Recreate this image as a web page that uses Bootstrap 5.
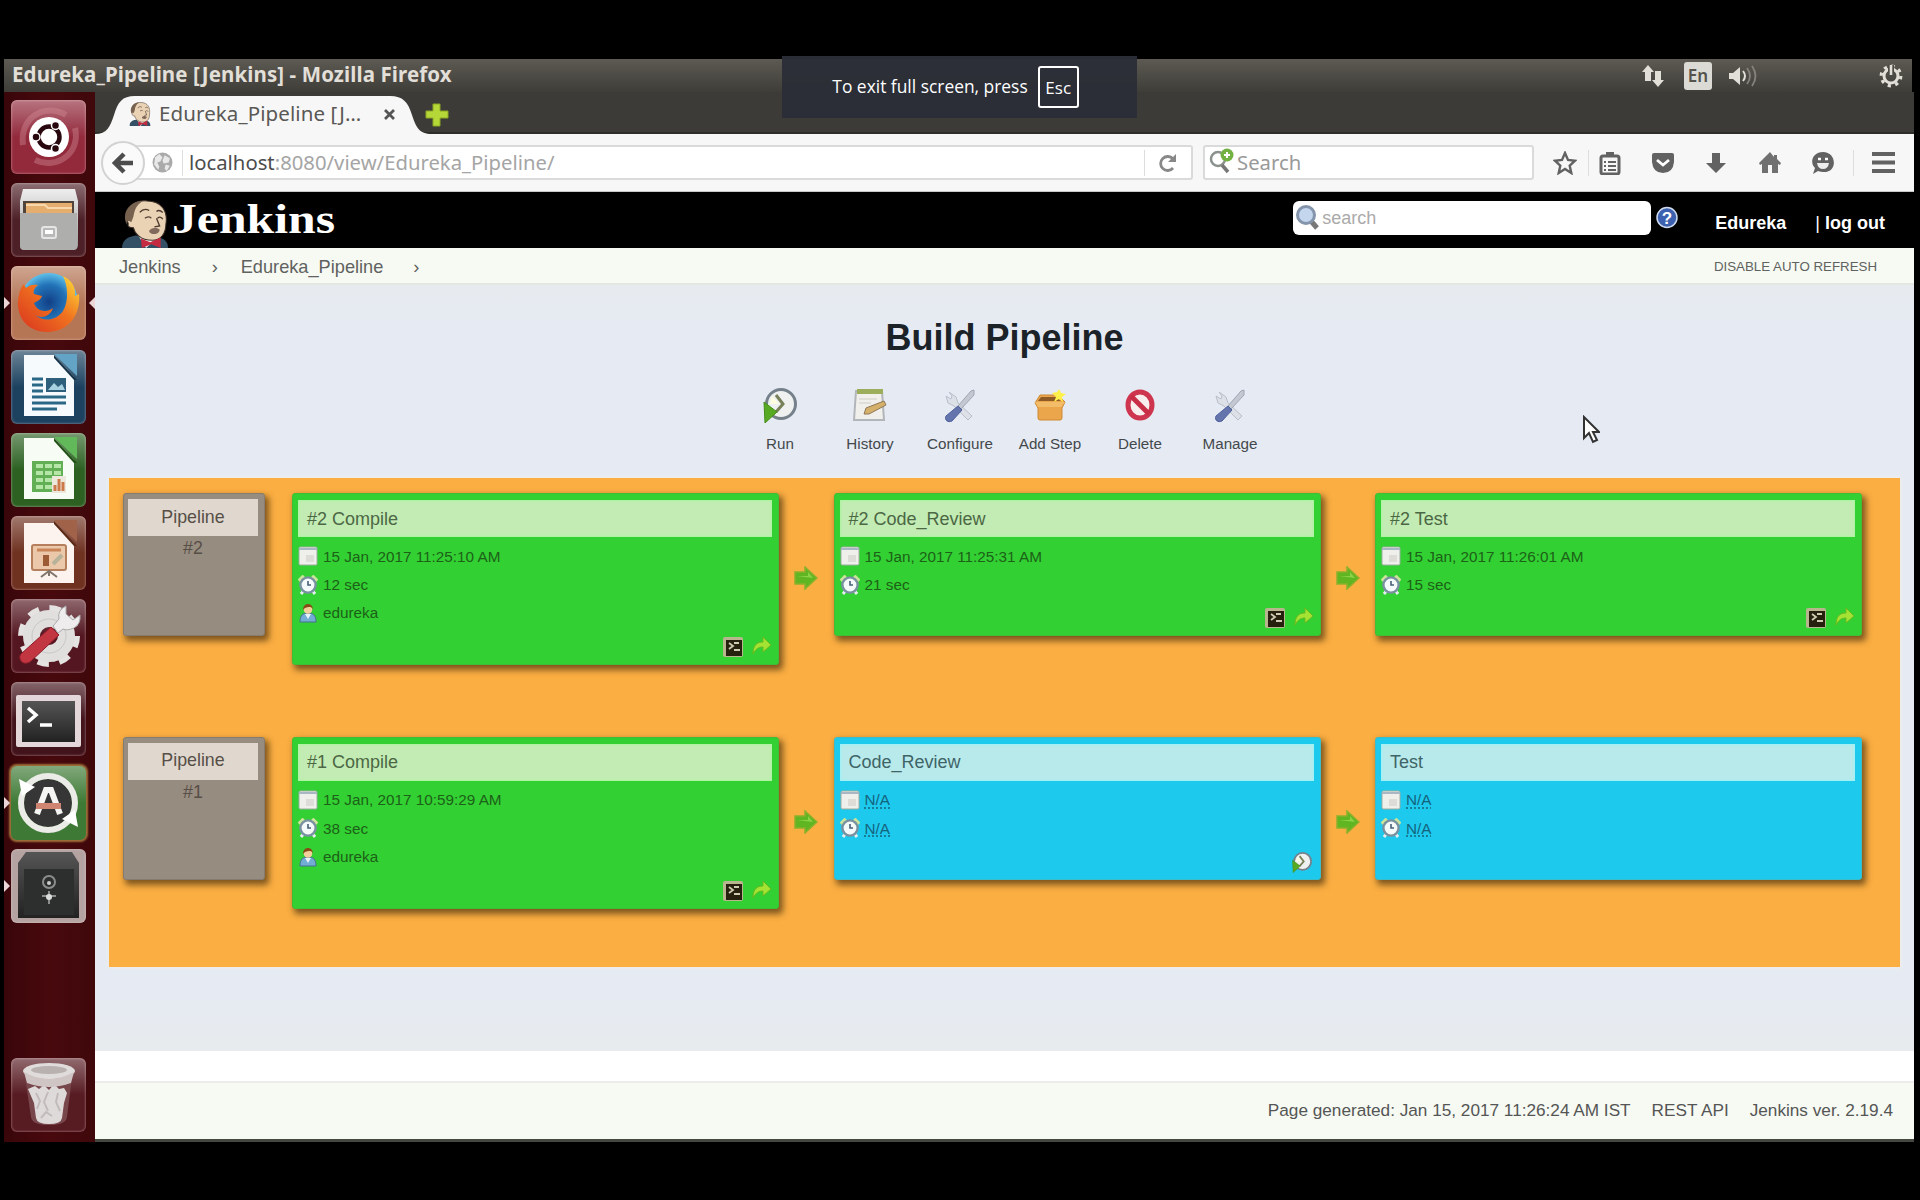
<!DOCTYPE html>
<html lang="en">
<head>
<meta charset="utf-8">
<title>Edureka_Pipeline [Jenkins]</title>
<link rel="stylesheet" href="https://cdn.jsdelivr.net/npm/bootstrap@5.3.0/dist/css/bootstrap.min.css">
<style>
body{background:#000;width:1920px;height:1200px;overflow:hidden;font-family:"Liberation Sans",Arial,sans-serif;line-height:1}
svg{display:block;flex:none}
.screen{margin:59px 8px 58px 4px;height:1083px;background:#42090c}
.ubuntu-text{font-family:"Noto Sans","Open Sans",sans-serif}
.panel-top{height:33px;background:linear-gradient(#5c5a52,#3e3d38);color:#e2dfd8;padding-left:8px;padding-right:8px}
.panel-title{font-size:20.5px;font-weight:700;letter-spacing:.1px;padding-bottom:2px}
.lang-box{width:28px;height:28px;background:#dcdad5;color:#55534d;border-radius:3px;font-size:17px;font-weight:600}
.launcher{width:91px;padding:8px 0 10px 7px;background:linear-gradient(90deg,#39060a,#48090d 50%,#3f080b)}
.tile{width:75px;height:74px;border-radius:6px;margin-bottom:9.2px;box-shadow:inset 0 0 2px 1px rgba(255,220,220,.28);overflow:visible;flex:none}
.pip{position:absolute;top:31px;border:6px solid transparent}
.pip-l{left:-7px;border-left-color:#ecd5d7;border-right-width:0}
.pip-r{right:-9px;border-right-color:#ecd5d7;border-left-width:0}
.tabstrip{height:42px;background:#3c3b37;border-bottom:2px solid #2e2d29}
.tab-shape{width:345px;height:42px}
.tab-face{left:0;top:2px;z-index:0}
.tab-label{font-size:20.5px;color:#5a5855;width:208px;letter-spacing:.1px}
.toolbar-ff{height:58px;background:#f7f7f7;border-bottom:1px solid #c8c8c8}
.back-btn{width:44px;height:44px;border-radius:50%;background:#fafafa;border:2px solid #d2d2d2;margin-left:6px;z-index:2}
.urlbar{width:1060px;height:35px;margin-left:-12px;border:2px solid #dadada;border-radius:3px;background:#fff;font-size:20.3px;color:#a5a5a5}
.findbar{width:331px;height:35px;margin-left:10px;border:2px solid #dadada;border-radius:3px;background:#fff;font-size:20.3px;color:#999}
.vsep{width:1px;height:26px;background:#ddd}
.tools{color:#626262}
.jhead{height:56px;background:#000}
.jsearch{width:358px;height:34px;border-radius:6px;background:#fff;color:#aaa;font-size:18px}
.jlink{color:#fff;font-weight:700;font-size:18px}
.crumbs{height:37px;background:#f6faf3;border-bottom:2px solid #e3e7e4;padding:4px 37px 0 24px;color:#5f625f;font-size:18.2px}
.crumb-small{font-size:13.3px;padding-bottom:2px}
.jbody{height:766px;background:linear-gradient(#e7ebef,#e6ebf3 40px,#e6ebf3 710px,#e7ebed)}
.jbody h1{font-size:36px;font-weight:700;color:#1b2228;margin:33px 0 29px;line-height:40px;text-align:center}
.acts{padding-left:640px}
.act{width:90px;font-size:15.2px;color:#44484c;gap:13px}
.board{margin:27px 14px 0 14px;height:489px;background:#fbae42;padding:15px 38px 0 14px;box-shadow:0 0 3px #fdf0dc}
.lane{height:243.6px}
.stepbox{border-radius:3px;box-shadow:3px 4px 6px 1px rgba(92,62,20,.78)}
.revbox{width:142px;height:143px;background:#978c80;border:1px solid #867b70;padding:5px 6px 0 4px;color:#574f47;font-size:17.8px;margin-right:27px}
.revbox-head{background:#e0d8cf;height:37px}
.job{width:487px;padding:6px 6px 6px 5px}
.job-head{height:37px;padding-left:9px;font-size:18px}
.ok{background:#33d033;border:1px solid #3fbe35;color:#1c6117}
.ok .job-head{background:#c2ecb4;color:#4c6744;box-shadow:inset 0 0 2px 1px #aaf6a0}
.wait{background:#1ec9ee;border:1px solid #3bbcc8;color:#14647d}
.wait .job-head{background:#b8eaeb;color:#3f6467;box-shadow:inset 0 0 2px 1px #9cf2f8}
.facts{font-size:15.3px;padding-top:5px}
.fact{height:28.3px;gap:5px}
.short{height:143px}.tall{height:172px}
.na{text-decoration:underline dotted;text-underline-offset:2px}
.link-arrow{width:54.5px;padding-top:73px}
.white-gap{height:32px;background:#fff;border-bottom:2px solid #ececea}
.jfoot{height:59px;background:#f6faf3;border-bottom:3px solid #444640;font-size:17.2px;color:#555;padding-right:21px;gap:21px}
.fs-note{left:782px;top:56px;width:355px;height:62px;padding-right:8px;background:rgba(43,46,54,.96);color:#fff;font-family:"Open Sans","Noto Sans",sans-serif;font-size:17.4px}
.fs-key{border:2px solid #fff;border-radius:3px;width:41px;height:42px;margin-left:10px;font-size:17px}
.pointer{left:1582px;top:415px}
</style>
<script src="https://cdn.jsdelivr.net/npm/bootstrap@5.3.0/dist/js/bootstrap.bundle.min.js"></script>
</head>
<body>
<svg width="0" height="0" class="position-absolute">
<defs>
<linearGradient id="sheen" x2="0" y2="1"><stop stop-color="#fff" stop-opacity=".35"/><stop offset=".5" stop-color="#fff" stop-opacity="0"/></linearGradient>
<linearGradient id="steel" x2="0" y2="1"><stop stop-color="#eee"/><stop offset="1" stop-color="#999"/></linearGradient>
<linearGradient id="coal" x2="0" y2="1"><stop stop-color="#555"/><stop offset="1" stop-color="#222"/></linearGradient>
<linearGradient id="fox" x1="0" y1="1" x2="1" y2="0"><stop stop-color="#d8321f"/><stop offset=".55" stop-color="#f0731f"/><stop offset="1" stop-color="#ffe23c"/></linearGradient>
<radialGradient id="globe"><stop stop-color="#123f86"/><stop offset=".6" stop-color="#2273b8"/><stop offset="1" stop-color="#5fc0ea"/></radialGradient>
<symbol id="cal" viewBox="0 0 20 20"><rect x="1" y="1" width="18" height="18" rx="1.5" fill="#eff0ec" stroke="#9cad9f"/><path d="M1 2h18v2H1z" fill="#a9b6c4"/><path d="M8 9h8v7H8z" fill="#dedcd6"/></symbol>
<symbol id="alarm" viewBox="0 0 20 20"><path d="M1 6L6 1M19 6l-5-5" stroke="#cbe49b" stroke-width="4"/><path d="M3 19l3-4M17 19l-3-4" stroke="#e4eeee" stroke-width="3"/><circle cx="10" cy="10" r="7.6" fill="#f4fafa" stroke="#7891a0" stroke-width="2.4"/><path d="M10 6v4h3" fill="none" stroke="#486077" stroke-width="1.6"/></symbol>
<symbol id="person" viewBox="0 0 20 20"><path d="M2 19c0-7 3-9 8-9s8 2 8 9z" fill="#72add4" stroke="#476f93"/><path d="M7 11l3 5 3-5z" fill="#e8f3fa"/><circle cx="10" cy="6.5" r="4.3" fill="#f3cf9b"/><path d="M5 7c0-8 10-8 10 0-1-3-2-3-4-3S6 5 5 7z" fill="#8a4a16"/></symbol>
<symbol id="console" viewBox="0 0 22 22"><rect x="1" y="1" width="20" height="20" rx="2" fill="#b9b58e"/><rect x="4" y="4" width="16" height="16" fill="#26210f"/><path d="M7 7l4 3-4 3M12 7h5M12 14h6" fill="none" stroke="#cfcbb0" stroke-width="1.8"/></symbol>
<symbol id="redo" viewBox="0 0 20 20"><path d="M1 18C1 9 5 6 11 6V1l8 8-8 7v-5c-5 0-7 2-10 7z" fill="#a4e234" stroke="#69b91e"/></symbol>
<symbol id="next" viewBox="0 0 24 24"><path d="M1 6h10V1l12 11-12 11v-5H1z" fill="#5fb522" stroke="#8cb12c" stroke-width="1.5"/><path d="M3 10h11V6l5 6z" fill="#8ad246"/></symbol>
<symbol id="run" viewBox="0 0 34 36"><circle cx="18" cy="17" r="14.5" fill="#eef1ef" stroke="#76808a" stroke-width="3"/><path d="M13 8l7 9-7 8" fill="none" stroke="#788059" stroke-width="3"/><path d="M9 9l7 8H7z" fill="#fffde0"/><path d="M1 15l13 10L2 36z" fill="#58aa22" stroke="#468c1b"/></symbol>
<symbol id="tools" viewBox="0 0 34 34"><path d="M6 4l7 5 2 6 14 13-4 4L11 18 5 15 3 8l5 3 1-3z" fill="#dde1e7" stroke="#b8bfca"/><path d="M31 2l-3 1-13 15 3 3L31 7z" fill="#c4c9d1" stroke="#9da5b2"/><path d="M15 18l4 4-10 11c-4 2-8-1-6-5z" fill="#6474ac" stroke="#50609b"/></symbol>
<symbol id="butler" viewBox="0 0 44 50"><path d="M0 50c0-9 7-12 13-13l22 2c6 1 9 5 9 11z" fill="#335065"/><path d="M15 36l8 14 12-12z" fill="#f5f2ef"/><path d="M6 25C0 7 14 0 24 1c14 0 20 11 18 24 0 10-5 17-13 17C17 42 12 34 11 29c-4 0-6-2-5-4z" fill="#ead3b5" stroke="#3d3029" stroke-width="1"/><path d="M5 26C-2 13 9 0 20 1 14 5 12 10 11 17l-2 6c-4-3-5 0-4 3z" fill="#77614f"/><path d="M17 13c3-4 6-4 9-2M33 12c2-2 4-1 6 1M22 19c2-2 5-2 6 0M34 19c2-2 4-1 5 1M33 19l3 8-5 1" fill="none" stroke="#4c3a2e" stroke-width="1.3"/><path d="M26 33c0-4 8-5 10-2 0 5-8 6-10 2z" fill="#81695b"/><path d="M18 40l9 4 10-5v11l-9-4-9 4z" fill="#c42a40"/></symbol>
</defs>
</svg>

<div class="screen d-flex flex-column">
 <header class="panel-top ubuntu-text d-flex align-items-center flex-shrink-0">
  <span class="panel-title">Edureka_Pipeline [Jenkins] - Mozilla Firefox</span>
  <div class="ms-auto d-flex align-items-center">
   <svg width="26" height="26" viewBox="0 0 26 26" fill="#e2dfd8"><path d="M8 2l6 7h-3v9H5V9H2zM18 24l6-7h-3V8h-6v9h-3z"/></svg>
   <span class="lang-box d-flex align-items-center justify-content-center" style="margin-left:18px">En</span>
   <svg width="30" height="26" viewBox="0 0 30 26" style="margin-left:16px"><path d="M1 10h4l7-6v18l-7-6H1z" fill="#e2dfd8"/><path d="M15 8q4 5 0 10" fill="none" stroke="#e2dfd8" stroke-width="2"/><path d="M19 5q6 8 0 16M24 3q7 10 0 20" fill="none" stroke="#85837c" stroke-width="1.8"/></svg>
   <svg width="26" height="26" viewBox="-13 -13 26 26" style="margin-left:120px" fill="none" stroke="#e2dfd8"><circle r="7" stroke-width="3"/><circle r="9.8" stroke-width="3.2" stroke-dasharray="3.2 4.5"/><path d="M0-11V0" stroke="#4c4b45" stroke-width="6"/><path d="M0-11V-1" stroke-width="2.6"/></svg>
  </div>
 </header>
 <div class="d-flex flex-fill">
  <nav class="launcher d-flex flex-column flex-shrink-0">
   <svg class="tile" viewBox="0 0 75 74" style="background:#922a3c"><rect width="75" height="74" rx="6" fill="url(#sheen)"/><path d="M12 45C8 18 34 2 55 15M64 28c6 25-18 42-40 32" fill="none" stroke="#d58e95" stroke-width="6" opacity=".4"/><circle cx="38" cy="37" r="20" fill="#fff"/><circle cx="38" cy="37" r="10.500" fill="none" stroke="#29070f" stroke-width="4.500"/><g fill="#29070f" stroke="#fff" stroke-width="1.500"><circle cx="25" cy="37" r="4"/><circle cx="44.500" cy="25.500" r="4"/><circle cx="44.500" cy="48.500" r="4"/></g></svg>
   <svg class="tile" viewBox="0 0 75 74" style="background:#4d2027"><rect width="75" height="74" rx="6" fill="url(#sheen)"/><path d="M12 6h52l3 12v44q0 5-5 5H14q-5 0-5-5V18z" fill="url(#steel)"/><path d="M12 18h51v12H12z" fill="#51443a"/><path d="M15 20h46v10H15z" fill="#e5ad6e"/><path d="M15 22h19l3 3h24" stroke="#f8d7ac" fill="none" stroke-width="2"/><path d="M9 30h57v33q0 4-4 4H13q-4 0-4-4z" fill="#aeaeac"/><rect x="31" y="44" width="14" height="11" rx="2" fill="#b8b8b8" stroke="#e5e5e5" stroke-width="2"/><path d="M34 49h8" stroke="#fff" stroke-width="4"/></svg>
   <div class="tile position-relative" style="background:#b57656"><span class="pip pip-l"></span><span class="pip pip-r"></span><svg width="75" height="74" viewBox="0 0 75 74"><rect width="75" height="74" rx="6" fill="url(#sheen)"/><circle cx="38" cy="36" r="29" fill="url(#globe)"/><path d="M52 10c9 4 13 12 12 20l4-2c2 19-9 37-30 38C15 67 3 48 8 29c1-6 3-9 5-11l2 4c3-3 7-4 12-3-4 3-5 6-4 9l8 2c-1 4-5 5-8 7 3 9 13 10 19 5-3 9-12 11-18 7 8 7 21 6 28-4 6-10 5-25 0-35z" fill="url(#fox)"/></svg></div>
   <svg class="tile" viewBox="0 0 75 74" style="background:#1d4260"><rect width="75" height="74" rx="6" fill="url(#sheen)"/><path d="M43 4h23v22z" fill="#63a3c6"/><path d="M13 5h30l20 22v39H13z" fill="#f6fafd"/><path d="M43 5l23 25h-3L43 8z" fill="#16344a"/><path d="M21 29h11M21 35h11M21 41h11M21 47h34M21 53h34M21 59h25" stroke="#2b6886" stroke-width="3"/><path d="M35 28h20v14H35z" fill="#2e607c"/><path d="M37 40l6-7 4 4 4-3 3 6z" fill="#a8d2e0"/></svg>
   <svg class="tile" viewBox="0 0 75 74" style="background:#2c6122"><rect width="75" height="74" rx="6" fill="url(#sheen)"/><path d="M43 4h23v22z" fill="#62b95a"/><path d="M13 5h30l20 22v39H13z" fill="#f7fcf5"/><path d="M43 5l23 25h-3L43 8z" fill="#205014"/><path d="M21 28h31v31H21z" fill="#63af55"/><path d="M25 31h7v4h-7zM34 31h7v4h-7zM43 31h7v4h-7zM25 38h7v4h-7zM34 38h7v4h-7zM43 38h7v4h-7zM25 45h7v4h-7zM34 45h7v4h-7zM25 52h7v4h-7zM34 52h7v4h-7z" fill="#b6e5a8"/><path d="M41 43h14v17H41z" fill="#ece8dc"/><path d="M44 58v-6M48 58V46M52 58v-9" stroke="#cd7a4b" stroke-width="3"/></svg>
   <svg class="tile" viewBox="0 0 75 74" style="background:#6f3120"><rect width="75" height="74" rx="6" fill="url(#sheen)"/><path d="M43 4h23v22z" fill="#a06248"/><path d="M13 7h30l20 22v38H13z" fill="#fdf3ee"/><path d="M43 5l23 25h-3L43 8z" fill="#5c2914"/><rect x="21" y="29" width="34" height="25" rx="2" fill="#ecc8ab" stroke="#b57e5d" stroke-width="2"/><path d="M26 34h24" stroke="#c98457" stroke-width="3"/><path d="M32 50V39h6v11z" fill="#9c5b35"/><path d="M42 48l9-9" stroke="#b6b39a" stroke-width="4"/><path d="M38 55l-8 6M38 55l8 6M38 54v6" stroke="#81746a" stroke-width="2"/></svg>
   <svg class="tile" viewBox="0 0 75 74" style="background:#541721"><rect width="75" height="74" rx="6" fill="url(#sheen)"/><circle cx="38" cy="37" r="27" fill="none" stroke="#e5e3e2" stroke-width="8" stroke-dasharray="11 10.200"/><circle cx="38" cy="37" r="17.500" fill="none" stroke="#e1dfde" stroke-width="17"/><circle cx="38" cy="37" r="17" fill="none" stroke="#c9c7c7" stroke-width="1"/><path d="M42 27l6-7q-2-9 7-13v8l7 6 7-5q1 9-6 13-7 3-11 1l-5 4z" fill="#eeeced" stroke="#aaa"/><path d="M40 28l8 8-29 27q-6 3-9-1-3-5 1-8z" fill="#c23642" stroke="#8f1b2a"/></svg>
   <svg class="tile" viewBox="0 0 75 74" style="background:#43131b"><rect width="75" height="74" rx="6" fill="url(#sheen)"/><rect x="5" y="13" width="65" height="52" rx="2" fill="#e4d7da"/><rect x="11" y="19" width="53" height="41" fill="url(#coal)"/><path d="M17 26l8 7-8 7M29 43h12" fill="none" stroke="#fff" stroke-width="3.500"/></svg>
   <div class="tile position-relative" style="background:#3e7a35;box-shadow:0 0 2px 2px #a1703a"><span class="pip pip-l"></span><svg width="75" height="74" viewBox="0 0 75 74"><rect width="75" height="74" rx="6" fill="url(#sheen)"/><circle cx="37" cy="37" r="24" fill="#363636"/><circle cx="37" cy="37" r="27" fill="none" stroke="#ebebe8" stroke-width="6"/><path d="M8 13l16 8-13 9zM67 61l-16-8 13-9z" fill="#fff"/><path d="M26 48l9-24h5l9 24" fill="none" stroke="#f5f5f4" stroke-width="6"/><path d="M25 40h25" stroke="#ce8571" stroke-width="6"/></svg></div>
   <div class="tile position-relative" style="background:#b4a3a1"><span class="pip pip-l"></span><svg width="75" height="74" viewBox="0 0 75 74"><path d="M15 3h46l7 11v55H7V14z" fill="url(#coal)"/><path d="M13 20h50v46H13z" fill="#2d2f2e"/><circle cx="38" cy="33" r="6" fill="none" stroke="#8c8e8d" stroke-width="2"/><circle cx="38" cy="34" r="2" fill="#ccc"/><path d="M31 47h14M38 42v13" stroke="#8c8e8d" stroke-width="2"/><circle cx="38" cy="48" r="3" fill="#ddd"/></svg></div>
   <svg class="tile mt-auto mb-0" viewBox="0 0 75 74" style="background:#571b22"><rect width="75" height="74" rx="6" fill="url(#sheen)"/><path d="M13 12l7 47q1 8 18 8t18-8l6-47z" fill="#77474b"/><path d="M17 31l7-3 4 3 5-4 5 5 5-6 5 5 5-1 3 5-3 10-2 15q-1 6-13 6t-13-6l-2-15z" fill="#dfdada"/><path d="M25 35l4 8-3 8M37 34l-4 10 4 9M47 35l-2 9 4 9M30 60l5-6 6 4" fill="none" stroke="#c2bbbb" stroke-width="2"/><ellipse cx="38" cy="13" rx="26" ry="8" fill="#e0dcdb"/><ellipse cx="38" cy="12" rx="18" ry="4" fill="#b9b1b0"/><path d="M13 14q25 14 50 0l-3 11q-22 8-44 0z" fill="#cfc5c4"/></svg>
  </nav>
  <main class="flex-fill bg-white">
   <div class="tabstrip ubuntu-text d-flex">
    <div class="tab-shape position-relative d-flex align-items-center">
     <svg class="tab-face position-absolute" width="345" height="40" viewBox="0 0 345 40"><path d="M0 40c12 0 15-7 19-19C23 8 27 2 40 2h255c13 0 18 6 22 19 4 12 7 19 20 19z" fill="#f7f7f7"/></svg>
     <svg class="position-relative" width="22" height="24" viewBox="0 0 44 50" style="margin:2px 0 0 34px"><use href="#butler"/></svg>
     <span class="tab-label position-relative text-nowrap" style="margin:1px 0 0 8px">Edureka_Pipeline [J…</span>
     <svg class="position-relative" width="11" height="11" viewBox="0 0 11 11" style="margin:2px 0 0 17px"><path d="M1 1l9 9M10 1l-9 9" stroke="#555" stroke-width="2.800"/></svg>
    </div>
    <svg width="24" height="24" viewBox="0 0 24 24" style="margin:11px 0 0 -15px"><path d="M8 1h7v7h8v7h-8v8H8v-8H1V8h7z" fill="#b5d738" stroke="#8aa823"/></svg>
   </div>
   <div class="toolbar-ff ubuntu-text d-flex align-items-center">
    <div class="back-btn d-flex align-items-center justify-content-center flex-shrink-0"><svg width="22" height="22" viewBox="0 0 22 22"><path d="M12 2L3 11l9 9M4 11h17" fill="none" stroke="#4d4d4d" stroke-width="4.500"/></svg></div>
    <div class="urlbar d-flex align-items-center flex-shrink-0">
     <svg width="21" height="21" viewBox="0 0 20 20" style="margin-left:17px"><circle cx="10" cy="10" r="9.500" fill="#aaa"/><path d="M3 5l4-3 3 3-2 4-3 1 2 4-1 3-4-5zM12 3l5 3-1 4-5 1-1-3zM13 12l4 1-3 5-2-2z" fill="#e9e9e9"/></svg>
     <span class="vsep" style="margin:0 6px 0 9px"></span><span class="urltext"><span style="color:#4d4d4d">localhost</span>:8080/view/Edureka_Pipeline/</span>
     <span class="vsep ms-auto"></span>
     <svg width="18" height="20" viewBox="0 0 18 20" style="margin:0 14px 0 14px"><path d="M14 6a7 7 0 1 0 0 9" fill="none" stroke="#888" stroke-width="2.800"/><path d="M17 1v8H9z" fill="#888"/></svg>
    </div>
    <div class="findbar d-flex align-items-center flex-shrink-0">
     <svg width="26" height="26" viewBox="0 0 26 26" style="margin:-4px 2px 0 4px"><circle cx="9" cy="11" r="7" fill="none" stroke="#8b928c" stroke-width="2.500"/><path d="M13 17l6 7" stroke="#777" stroke-width="3.500"/><circle cx="18" cy="7" r="6.500" fill="#73b143"/><path d="M18 4v6M15 7h6" stroke="#fff" stroke-width="2"/></svg>
     <span>Search</span>
    </div>
    <div class="tools d-flex align-items-center">
     <svg width="24" height="24" viewBox="0 0 24 24" style="margin-left:19px"><path d="M12 2l3 7 7 .7-5.300 5 1.600 7.300L12 18l-6.300 4 1.600-7.300L2 9.700 9 9z" fill="none" stroke="currentColor" stroke-width="2.400"/></svg>
     <span class="vsep" style="margin:0 10px 0 11px"></span>
     <svg width="22" height="24" viewBox="0 0 22 24"><rect x="2" y="5" width="18" height="18" rx="2" fill="none" stroke="currentColor" stroke-width="3"/><path d="M7 1h8v5H7z" fill="currentColor"/><path d="M5 11h2M9 11h8M5 15h2M9 15h8M5 19h2M9 19h8" stroke="currentColor" stroke-width="2"/></svg>
     <svg width="24" height="22" viewBox="0 0 24 22" style="margin-left:30px"><path d="M1 3q0-2 2-2h18q2 0 2 2v7q-1 11-11 11T1 10z" fill="currentColor"/><path d="M6 8l6 5 6-5" fill="none" stroke="#fff" stroke-width="2.800"/></svg>
     <svg width="22" height="22" viewBox="0 0 22 22" style="margin-left:30px"><path d="M7 1h8v10h6L11 21 1 11h6z" fill="currentColor"/></svg>
     <svg width="24" height="22" viewBox="0 0 24 22" style="margin-left:31px"><path d="M12 0L1 11l1 2 2-1v9h6v-8h4v8h6v-9l2 1 1-2-4-4V3h-3v2z" fill="#707070"/></svg>
     <svg width="24" height="24" viewBox="0 0 24 24" style="margin-left:29px"><path d="M12 1c14 0 15 21 0 20-3 0-4-1-5-1l-5 3 2-6C-2 11 2 1 12 1z" fill="currentColor"/><path d="M7 8h3M14 8h3" stroke="#fff" stroke-width="2.500"/><path d="M6 12h12q-1 6-6 6t-6-6z" fill="#eee"/></svg>
     <span class="vsep" style="margin:0 18px"></span>
     <svg width="23" height="23" viewBox="0 0 23 23"><path d="M0 3h23M0 11.500h23M0 20h23" stroke="currentColor" stroke-width="4"/></svg>
    </div>
   </div>
   <div class="jhead d-flex align-items-center">
    <svg width="46" height="48" viewBox="0 0 44 50" preserveAspectRatio="none" style="margin:8px 0 0 27px"><use href="#butler"/></svg>
    <svg width="170" height="50" viewBox="0 0 170 50"><text x="4" y="38" textLength="163" lengthAdjust="spacingAndGlyphs" font-family="Liberation Serif" font-weight="700" font-size="42" fill="#fff">Jenkins</text></svg>
    <div class="jsearch d-flex align-items-center ms-auto" style="margin-top:-5px"><svg width="25" height="26" viewBox="0 0 25 26" style="margin:-2px 2px 0 2px"><path d="M16 17l6 7" stroke="#787878" stroke-width="5"/><circle cx="11" cy="11" r="8.500" fill="#c3d6ed" stroke="#8394ab" stroke-width="3"/></svg>search</div>
    <svg width="22" height="23" viewBox="0 0 22 23" style="margin:0 37px 5px 5px"><circle cx="11" cy="11.500" r="10" fill="#3c61b0" stroke="#cfdbef" stroke-width="1.500"/><text x="11" y="18" text-anchor="middle" font-family="Liberation Sans" font-weight="700" font-size="17" fill="#fff">?</text></svg>
    <span class="jlink" style="margin:5px 29px 0 0">Edureka</span><span class="jlink" style="margin:5px 29px 0 0"><span class="fw-normal">|</span> log out</span>
   </div>
   <div class="crumbs d-flex align-items-center">
    <span>Jenkins</span><span style="margin:0 23px 0 31px">›</span><span>Edureka_Pipeline</span><span style="margin-left:30px">›</span>
    <span class="crumb-small ms-auto">DISABLE AUTO REFRESH</span>
   </div>
   <section class="jbody overflow-hidden">
    <h1>Build Pipeline</h1>
    <div class="acts d-flex">
     <div class="act d-flex flex-column align-items-center"><svg width="34" height="36"><use href="#run"/></svg>Run</div>
     <div class="act d-flex flex-column align-items-center"><svg width="34" height="36" viewBox="0 0 34 36"><path d="M3 4h26l2 29H1z" fill="#f0efeb" stroke="#b2b5ba" stroke-width="2"/><path d="M4 2h26v5H4z" fill="#9cad5c"/><path d="M6 12h18M6 16h12" stroke="#e0ded8" stroke-width="2"/><path d="M11 27l2-6 18-7 2 4-17 9z" fill="#d4b06a" stroke="#8d7755"/></svg>History</div>
     <div class="act d-flex flex-column align-items-center"><svg width="34" height="36"><use href="#tools"/></svg>Configure</div>
     <div class="act d-flex flex-column align-items-center"><svg width="34" height="36" viewBox="0 0 34 36"><path d="M7 8h18l7 7-3 6v10q0 2-2 2H7q-2 0-2-2V21l-3-5z" fill="#eba64b" stroke="#ce8933"/><path d="M8 10h15l5 4H5z" fill="#8e5b24"/><path d="M2 15h30l-4 5H5z" fill="#f3bc68"/><path d="M26 2l2 4 5 1-4 3 1 5-4-3-5 3 2-5-4-4 5-1z" fill="#fff04a"/></svg>Add Step</div>
     <div class="act d-flex flex-column align-items-center"><svg width="34" height="36" viewBox="0 0 34 36"><ellipse cx="17" cy="18" rx="12" ry="13" fill="#f9eeee" stroke="#cd364e" stroke-width="5"/><path d="M8 9l18 18" stroke="#c92e47" stroke-width="5"/></svg>Delete</div>
     <div class="act d-flex flex-column align-items-center"><svg width="34" height="36"><use href="#tools"/></svg>Manage</div>
    </div>
    <div class="board">
     <div class="lane d-flex align-items-start">
      <div class="stepbox revbox text-center"><div class="revbox-head d-flex align-items-center justify-content-center">Pipeline</div><div style="padding-top:4px">#2</div></div>
      <div class="stepbox job ok tall d-flex flex-column"><div class="job-head d-flex align-items-center">#2 Compile</div>
       <div class="facts"><div class="fact d-flex align-items-center"><svg width="20" height="20"><use href="#cal"/></svg>15 Jan, 2017 11:25:10 AM</div><div class="fact d-flex align-items-center"><svg width="20" height="20"><use href="#alarm"/></svg>12 sec</div><div class="fact d-flex align-items-center"><svg width="20" height="20"><use href="#person"/></svg>edureka</div></div>
       <div class="d-flex justify-content-end mt-auto" style="gap:8px"><svg width="22" height="22"><use href="#console"/></svg><svg width="20" height="20"><use href="#redo"/></svg></div></div>
      <div class="link-arrow d-flex justify-content-center"><svg width="24" height="24"><use href="#next"/></svg></div>
      <div class="stepbox job ok short d-flex flex-column"><div class="job-head d-flex align-items-center">#2 Code_Review</div>
       <div class="facts"><div class="fact d-flex align-items-center"><svg width="20" height="20"><use href="#cal"/></svg>15 Jan, 2017 11:25:31 AM</div><div class="fact d-flex align-items-center"><svg width="20" height="20"><use href="#alarm"/></svg>21 sec</div></div>
       <div class="d-flex justify-content-end mt-auto" style="gap:8px"><svg width="22" height="22"><use href="#console"/></svg><svg width="20" height="20"><use href="#redo"/></svg></div></div>
      <div class="link-arrow d-flex justify-content-center"><svg width="24" height="24"><use href="#next"/></svg></div>
      <div class="stepbox job ok short d-flex flex-column"><div class="job-head d-flex align-items-center">#2 Test</div>
       <div class="facts"><div class="fact d-flex align-items-center"><svg width="20" height="20"><use href="#cal"/></svg>15 Jan, 2017 11:26:01 AM</div><div class="fact d-flex align-items-center"><svg width="20" height="20"><use href="#alarm"/></svg>15 sec</div></div>
       <div class="d-flex justify-content-end mt-auto" style="gap:8px"><svg width="22" height="22"><use href="#console"/></svg><svg width="20" height="20"><use href="#redo"/></svg></div></div>
     </div>
     <div class="lane d-flex align-items-start">
      <div class="stepbox revbox text-center"><div class="revbox-head d-flex align-items-center justify-content-center">Pipeline</div><div style="padding-top:4px">#1</div></div>
      <div class="stepbox job ok tall d-flex flex-column"><div class="job-head d-flex align-items-center">#1 Compile</div>
       <div class="facts"><div class="fact d-flex align-items-center"><svg width="20" height="20"><use href="#cal"/></svg>15 Jan, 2017 10:59:29 AM</div><div class="fact d-flex align-items-center"><svg width="20" height="20"><use href="#alarm"/></svg>38 sec</div><div class="fact d-flex align-items-center"><svg width="20" height="20"><use href="#person"/></svg>edureka</div></div>
       <div class="d-flex justify-content-end mt-auto" style="gap:8px"><svg width="22" height="22"><use href="#console"/></svg><svg width="20" height="20"><use href="#redo"/></svg></div></div>
      <div class="link-arrow d-flex justify-content-center"><svg width="24" height="24"><use href="#next"/></svg></div>
      <div class="stepbox job wait short d-flex flex-column"><div class="job-head d-flex align-items-center">Code_Review</div>
       <div class="facts"><div class="fact d-flex align-items-center"><svg width="20" height="20"><use href="#cal"/></svg><span class="na">N/A</span></div><div class="fact d-flex align-items-center"><svg width="20" height="20"><use href="#alarm"/></svg><span class="na">N/A</span></div></div>
       <div class="d-flex justify-content-end mt-auto" style="padding-right:2px"><svg width="20" height="22"><use href="#run"/></svg></div></div>
      <div class="link-arrow d-flex justify-content-center"><svg width="24" height="24"><use href="#next"/></svg></div>
      <div class="stepbox job wait short d-flex flex-column"><div class="job-head d-flex align-items-center">Test</div>
       <div class="facts"><div class="fact d-flex align-items-center"><svg width="20" height="20"><use href="#cal"/></svg><span class="na">N/A</span></div><div class="fact d-flex align-items-center"><svg width="20" height="20"><use href="#alarm"/></svg><span class="na">N/A</span></div></div></div>
     </div>
    </div>
   </section>
   <div class="white-gap"></div>
   <footer class="jfoot d-flex align-items-center justify-content-end"><span>Page generated: Jan 15, 2017 11:26:24 AM IST</span><span>REST API</span><span>Jenkins ver. 2.19.4</span></footer>
  </main>
 </div>
</div>

<div class="fs-note position-absolute d-flex align-items-center justify-content-center"><span>To exit full screen, press</span><span class="fs-key d-flex align-items-center justify-content-center">Esc</span></div>
<svg class="pointer position-absolute" width="18" height="29" viewBox="0 0 18 29"><path d="M2 2v21l5-5 4 9 4-2-4-8h6z" fill="#fff" stroke="#333" stroke-width="2"/></svg>
</body>
</html>
